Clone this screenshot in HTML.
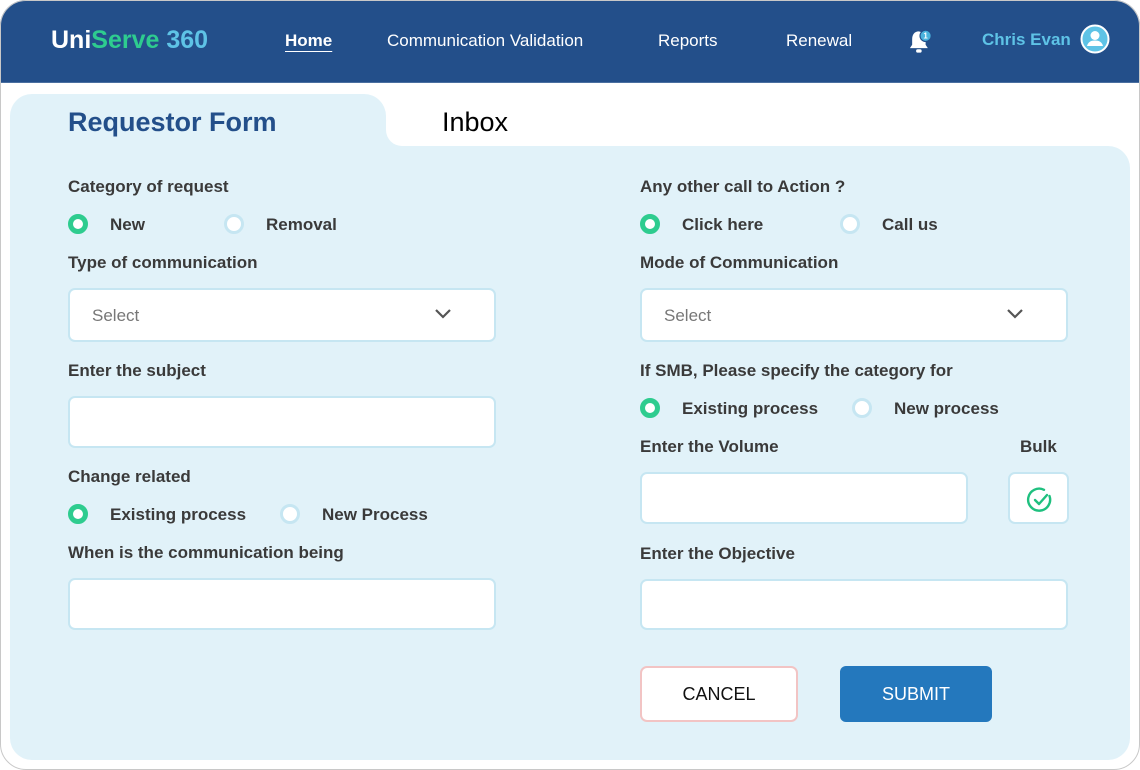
<!DOCTYPE html>
<html><head><style>
*{margin:0;padding:0;box-sizing:border-box}
html,body{width:1140px;height:770px}
body{background:#fff;font-family:"Liberation Sans",sans-serif;position:relative;overflow:hidden}
.frame{position:absolute;left:0;top:0;width:1140px;height:770px;border-radius:26px;overflow:hidden;background:#fff}
.outline{position:absolute;left:0;top:0;width:1140px;height:770px;border:1px solid #c8c8c8;border-radius:26px;z-index:5}
.hdr{position:absolute;left:0;top:0;width:1140px;height:83px;background:#234f8a;border-bottom:1px solid #4a6fa0}
.a{position:absolute;white-space:nowrap}
.nav{color:#fff;font-size:17px;top:31px}
.panel{position:absolute;left:10px;top:146px;width:1120px;height:614px;background:#e1f2f9;border-radius:0 22px 22px 22px}
.tab{position:absolute;left:10px;top:94px;width:376px;height:70px;background:#e1f2f9;border-radius:22px 22px 0 0}
.curve{position:absolute;left:386px;top:130px;width:30px;height:16px;background:#e1f2f9}
.curve:after{content:"";position:absolute;left:0;top:0;width:30px;height:16px;background:#fff;border-bottom-left-radius:16px}
.lbl{font-size:17px;color:#3a3a3a;font-weight:bold}
.opt{font-size:17px;color:#3a3a3a;font-weight:bold}
.box{position:absolute;background:#fff;border:2px solid #c6e6f2;border-radius:7px}
.r{position:absolute;width:20px;height:20px;border-radius:50%}
.on{background:#fff;border:5px solid #2ecc8f}
.off{background:#fff;border:3px solid #c6e6f2}
.sel{position:absolute;left:22px;top:16px;font-size:17px;color:#777}
.chev{position:absolute;right:42px;top:18px}
</style></head><body><div class="frame">
<div class="hdr">
<div class="a" style="left:51px;top:26px;font-size:25px;font-weight:bold;color:#fff">Uni<span style="color:#2ecc8f">Serve</span> <span style="color:#5ec3e6">360</span></div>
<div class="a nav" style="left:285px;font-weight:bold;text-decoration:underline;text-underline-offset:5px">Home</div>
<div class="a nav" style="left:387px">Communication Validation</div>
<div class="a nav" style="left:658px">Reports</div>
<div class="a nav" style="left:786px">Renewal</div>
<svg class="a" style="left:906px;top:28px" width="28" height="28" viewBox="0 0 24 25"><path d="M11 3c-4 0-6 3-6 7v5l-2 3h16l-2-3v-5c0-3-2-6-6-7z" fill="#fff"/><rect x="8.5" y="19" width="5" height="3" rx="1.5" fill="#fff"/><circle cx="17" cy="7" r="5" fill="#4ab2dd" stroke="#234f8a" stroke-width="1"/><text x="17" y="9.5" font-size="7" fill="#fff" text-anchor="middle" font-family="Liberation Sans" font-weight="bold">1</text></svg>
<div class="a nav" style="left:982px;color:#5ec3e6;font-weight:bold;top:30px">Chris Evan</div>
<svg class="a" style="left:1080px;top:24px" width="30" height="30" viewBox="0 0 30 30"><circle cx="15" cy="15" r="13.5" fill="#5ec3e6" stroke="#fff" stroke-width="2"/><circle cx="15" cy="11.5" r="4.5" fill="#fff"/><path d="M7 22c1-4 4-5.5 8-5.5s7 1.5 8 5.5z" fill="#fff"/></svg>
</div>
<div class="tab"></div><div class="curve"></div>
<div class="panel"></div>
<div class="a" style="left:68px;top:107px;font-size:27px;font-weight:bold;color:#234f8a">Requestor Form</div>
<div class="a" style="left:442px;top:107px;font-size:27px;color:#000">Inbox</div>

<div class="a lbl" style="left:68px;top:177px">Category of request</div>
<div class="r on" style="left:68px;top:214px"></div><div class="a opt" style="left:110px;top:215px">New</div>
<div class="r off" style="left:224px;top:214px"></div><div class="a opt" style="left:266px;top:215px">Removal</div>
<div class="a lbl" style="left:68px;top:253px">Type of communication</div>
<div class="box" style="left:68px;top:288px;width:428px;height:54px"><div class="sel">Select</div><svg class="chev" width="18" height="12"><path d="M2 2l7 7 7-7" stroke="#555" stroke-width="2.2" fill="none"/></svg></div>
<div class="a lbl" style="left:68px;top:361px">Enter the subject</div>
<div class="box" style="left:68px;top:396px;width:428px;height:52px"></div>
<div class="a lbl" style="left:68px;top:467px">Change related</div>
<div class="r on" style="left:68px;top:504px"></div><div class="a opt" style="left:110px;top:505px">Existing process</div>
<div class="r off" style="left:280px;top:504px"></div><div class="a opt" style="left:322px;top:505px">New Process</div>
<div class="a lbl" style="left:68px;top:543px">When is the communication being</div>
<div class="box" style="left:68px;top:578px;width:428px;height:52px"></div>

<div class="a lbl" style="left:640px;top:177px">Any other call to Action ?</div>
<div class="r on" style="left:640px;top:214px"></div><div class="a opt" style="left:682px;top:215px">Click here</div>
<div class="r off" style="left:840px;top:214px"></div><div class="a opt" style="left:882px;top:215px">Call us</div>
<div class="a lbl" style="left:640px;top:253px">Mode of Communication</div>
<div class="box" style="left:640px;top:288px;width:428px;height:54px"><div class="sel">Select</div><svg class="chev" width="18" height="12"><path d="M2 2l7 7 7-7" stroke="#555" stroke-width="2.2" fill="none"/></svg></div>
<div class="a lbl" style="left:640px;top:361px">If SMB, Please specify the category for</div>
<div class="r on" style="left:640px;top:398px"></div><div class="a opt" style="left:682px;top:399px">Existing process</div>
<div class="r off" style="left:852px;top:398px"></div><div class="a opt" style="left:894px;top:399px">New process</div>
<div class="a lbl" style="left:640px;top:437px">Enter the Volume</div>
<div class="a lbl" style="left:1020px;top:437px">Bulk</div>
<div class="box" style="left:640px;top:472px;width:328px;height:52px"></div>
<div class="box" style="left:1008px;top:472px;width:61px;height:52px"><svg style="position:absolute;left:15px;top:11px" width="30" height="30" viewBox="0 0 30 30"><path d="M24.5 11A11 11 0 1 1 19 4.8" stroke="#1fc07f" stroke-width="2.4" fill="none" stroke-linecap="round"/><path d="M10 15l4 4 8-9" stroke="#1fc07f" stroke-width="2.4" fill="none" stroke-linecap="round" stroke-linejoin="round"/></svg></div>
<div class="a lbl" style="left:640px;top:544px">Enter the Objective</div>
<div class="box" style="left:640px;top:579px;width:428px;height:51px"></div>
<div class="box" style="left:640px;top:666px;width:158px;height:56px;border-color:#f2c4c4;text-align:center;line-height:52px;font-size:18px;color:#111">CANCEL</div>
<div class="a" style="left:840px;top:666px;width:152px;height:56px;background:#2478bd;border-radius:6px;text-align:center;line-height:56px;font-size:18px;color:#fff">SUBMIT</div>
</div>
<div class="outline"></div>
</body></html>
